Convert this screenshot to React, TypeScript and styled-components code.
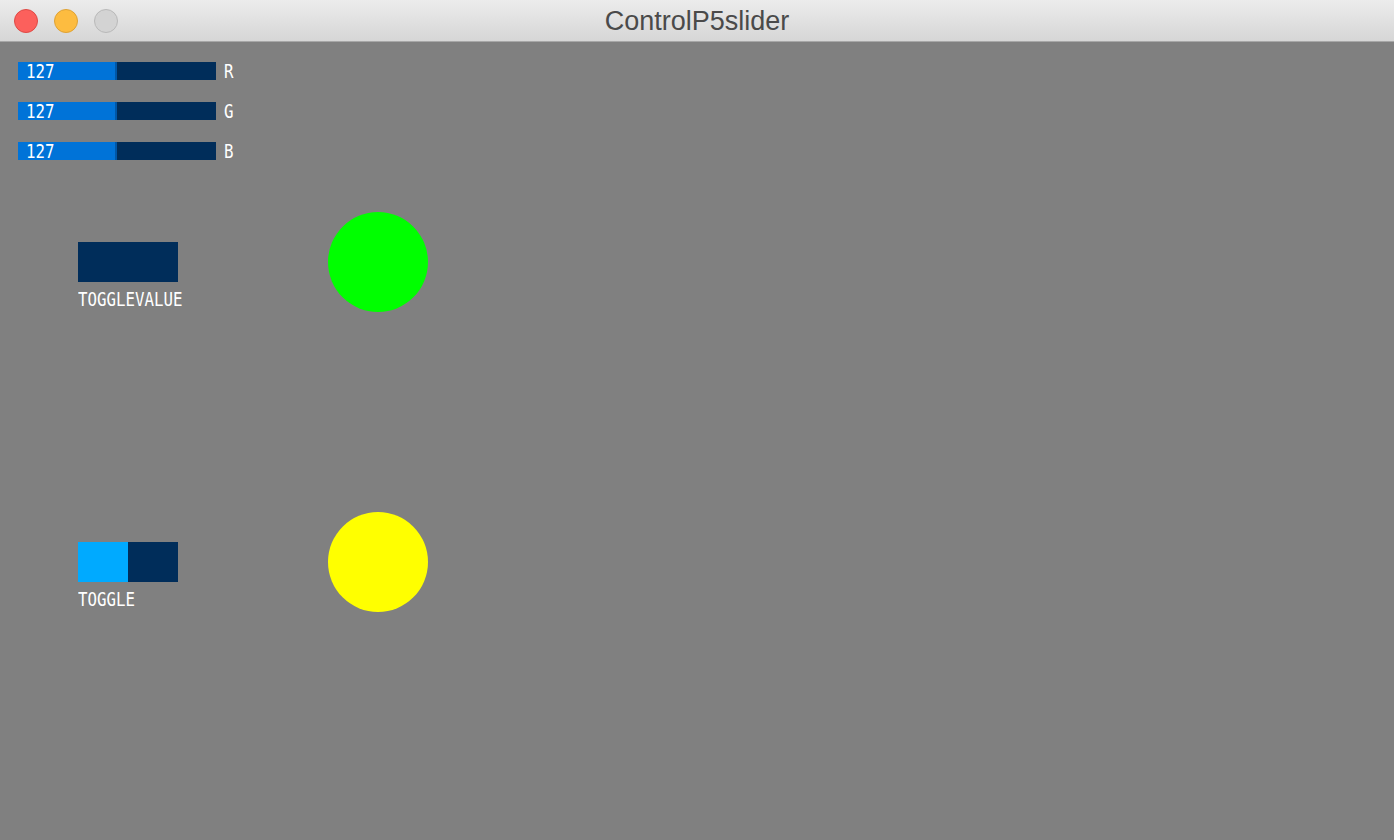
import React from "react";
import styled, { createGlobalStyle } from "styled-components";

const Global = createGlobalStyle`
  html, body { margin: 0; padding: 0; background: #808080; }
  body { width: 1394px; height: 840px; overflow: hidden; }
`;

const Window = styled.div`
  width: 1394px;
  height: 840px;
  background: #808080;
  display: flex;
  flex-direction: column;
`;

const TitleBar = styled.div`
  height: 42px;
  box-sizing: border-box;
  border-bottom: 1px solid #a7a7a7;
  background: linear-gradient(#ececec, #d6d6d6);
  display: grid;
  grid-template-columns: 200px 1fr 200px;
  align-items: center;
`;

const Lights = styled.div`
  display: flex;
  gap: 16px;
  padding-left: 14px;
`;

const Light = styled.div<{ $fill: string; $edge: string }>`
  width: 24px;
  height: 24px;
  box-sizing: border-box;
  border-radius: 50%;
  background: ${(p) => p.$fill};
  border: 1px solid ${(p) => p.$edge};
`;

const Title = styled.div`
  text-align: center;
  font-family: "Liberation Sans", Arial, sans-serif;
  font-size: 27px;
  color: #4a4a4a;
  line-height: 40px;
`;

const Content = styled.div`
  padding: 20px 0 0 18px;
  display: flex;
  flex-direction: column;
`;

const Sliders = styled.div`
  display: flex;
  flex-direction: column;
  gap: 22px;
`;

const SliderRow = styled.div`
  display: flex;
  align-items: center;
  gap: 8px;
  height: 18px;
`;

const Track = styled.div`
  position: relative;
  width: 198px;
  height: 18px;
  background: #002d5a;
  display: flex;
  align-items: center;
`;

const Fill = styled.div`
  position: absolute;
  left: 0;
  top: 0;
  bottom: 0;
  background: #0073d8;
  border-right: 2px solid #0057a8;
`;

const PixelText = styled.span`
  display: inline-block;
  font-family: "DejaVu Sans Mono", "Liberation Mono", monospace;
  font-size: 19px;
  line-height: 18px;
  color: #ffffff;
  transform: scaleX(0.83);
  transform-origin: left center;
  white-space: nowrap;
`;

const ValueText = styled(PixelText)`
  position: relative;
  margin-left: 8px;
`;

const Section = styled.div<{ $top: number }>`
  display: flex;
  align-items: flex-start;
  margin-top: ${(p) => p.$top}px;
  padding-left: 60px;
`;

const ToggleBlock = styled.div`
  width: 250px;
  margin-top: 30px;
  display: flex;
  flex-direction: column;
  gap: 8px;
`;

const Toggle = styled.div<{ $on: boolean }>`
  width: 100px;
  height: 40px;
  background: ${(p) =>
    p.$on ? "linear-gradient(90deg, #00aaff 50%, #002d5a 50%)" : "#002d5a"};
`;

const Circle = styled.div<{ $color: string }>`
  width: 100px;
  height: 100px;
  border-radius: 50%;
  background: ${(p) => p.$color};
`;

const sliders = [
  { label: "R", value: 127 },
  { label: "G", value: 127 },
  { label: "B", value: 127 },
];

export default function App() {
  return (
    <Window>
      <Global />
      <TitleBar>
        <Lights>
          <Light $fill="#fc605c" $edge="#de4a45" />
          <Light $fill="#fdbc40" $edge="#dea235" />
          <Light $fill="#d3d3d3" $edge="#b9b9b9" />
        </Lights>
        <Title>ControlP5slider</Title>
        <div />
      </TitleBar>
      <Content>
        <Sliders>
          {sliders.map((s) => (
            <SliderRow key={s.label}>
              <Track>
                <Fill style={{ width: `${(s.value / 255) * 198 - 2}px` }} />
                <ValueText>{s.value}</ValueText>
              </Track>
              <PixelText>{s.label}</PixelText>
            </SliderRow>
          ))}
        </Sliders>
        <Section $top={52}>
          <ToggleBlock>
            <Toggle $on={false} />
            <PixelText>TOGGLEVALUE</PixelText>
          </ToggleBlock>
          <Circle $color="#00ff00" />
        </Section>
        <Section $top={200}>
          <ToggleBlock>
            <Toggle $on={true} />
            <PixelText>TOGGLE</PixelText>
          </ToggleBlock>
          <Circle $color="#ffff00" />
        </Section>
      </Content>
    </Window>
  );
}
